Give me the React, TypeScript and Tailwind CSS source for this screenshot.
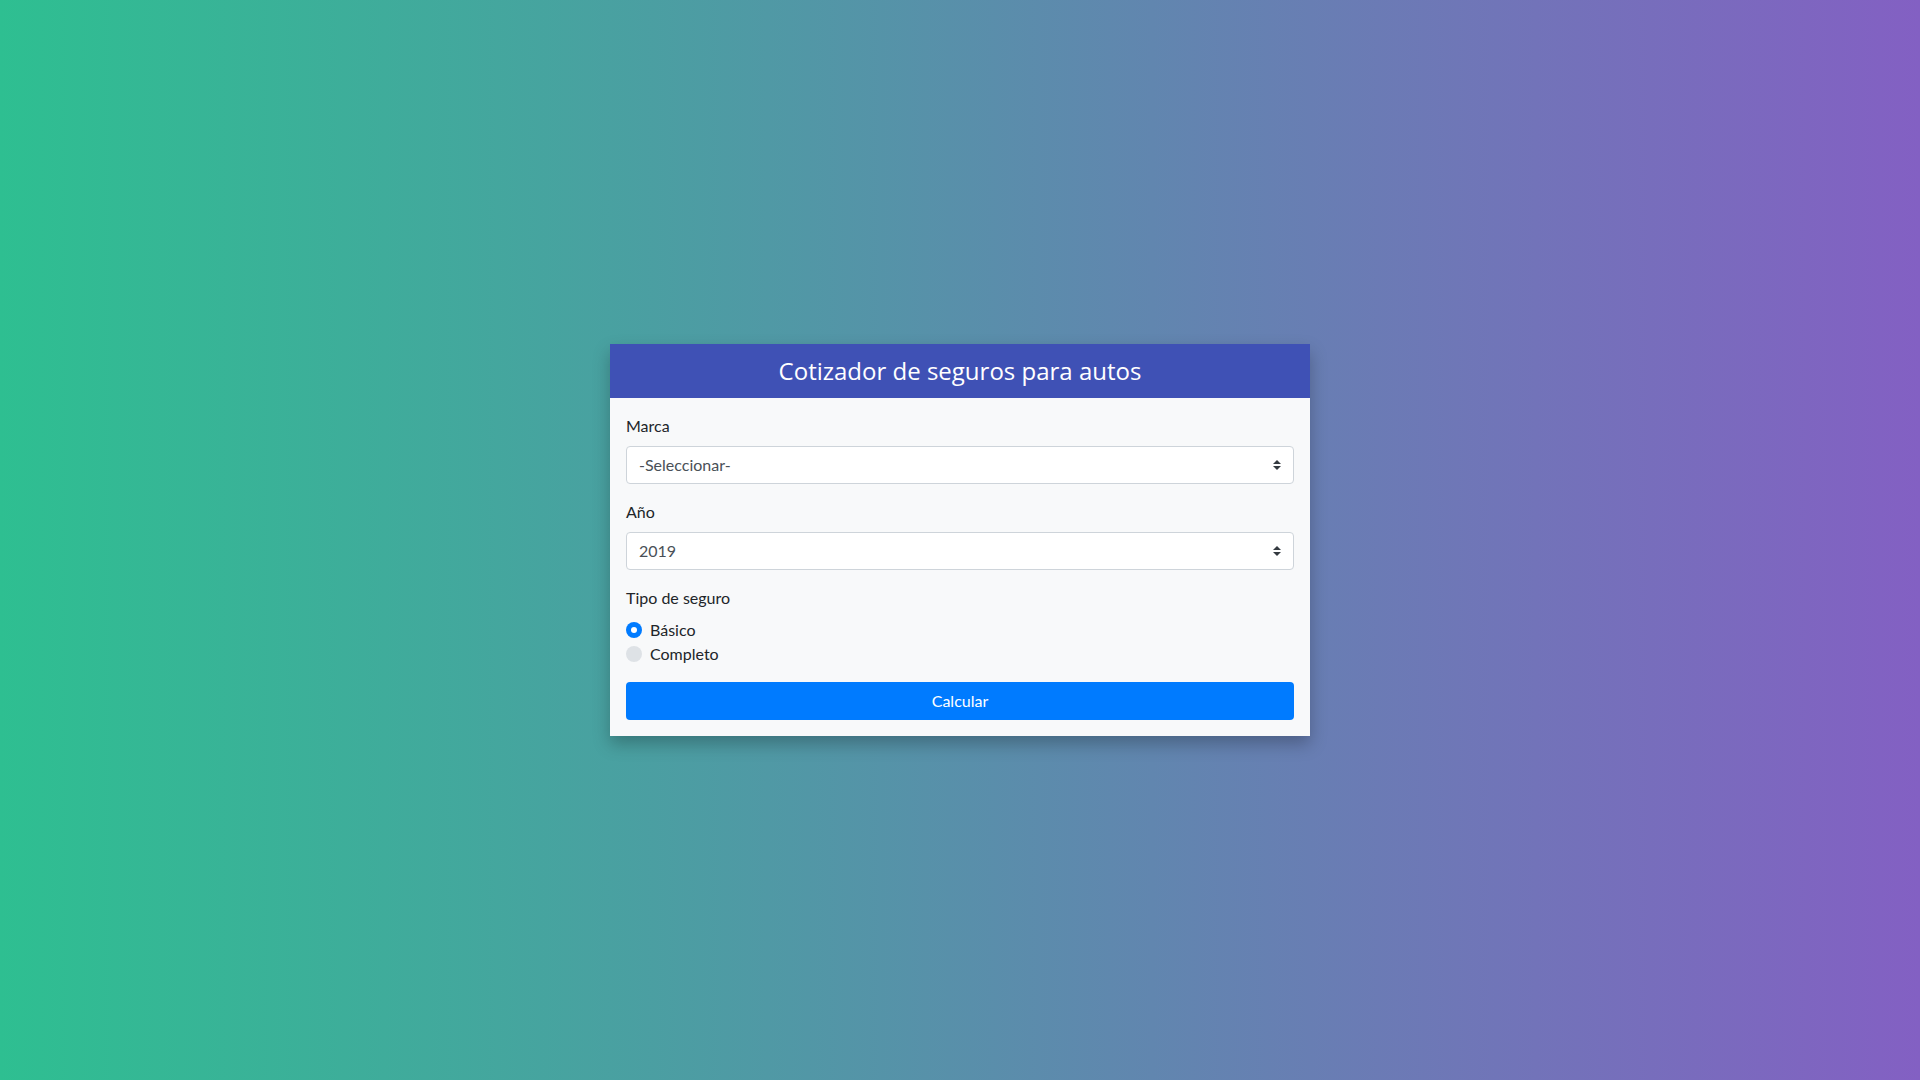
import React, { useState } from "react";

function Arrows() {
  return (
    <svg width="8" height="10" viewBox="0 0 4 5" className="absolute right-[13px] top-1/2 -translate-y-1/2 pointer-events-none">
      <path fill="#343a40" d="M2 0L0 2h4zm0 5L0 3h4z" />
    </svg>
  );
}

function Select({ value, options }: { value: string; options: string[] }) {
  return (
    <div className="relative mb-4">
      <select
        defaultValue={value}
        className="block w-full h-[38px] appearance-none rounded-[4px] border border-[#ced4da] bg-white pl-[12px] pr-8 text-[16px] leading-[24px] text-[#495057] outline-none"
        style={{ fontFamily: "Lato, 'Noto Sans', sans-serif" }}
      >
        {options.map((o) => (
          <option key={o}>{o}</option>
        ))}
      </select>
      <Arrows />
    </div>
  );
}

function Radio({ label, checked, onClick }: { label: string; checked: boolean; onClick: () => void }) {
  return (
    <label className="flex items-center h-6 cursor-pointer" onClick={onClick}>
      <span
        className={
          checked
            ? "w-4 h-4 rounded-full bg-[#007bff] flex items-center justify-center"
            : "w-4 h-4 rounded-full bg-[#dee2e6] flex items-center justify-center"
        }
      >
        {checked && <span className="w-[6px] h-[6px] rounded-full bg-white" />}
      </span>
      <span className="ml-[8px] text-[16px] text-[#212529]">{label}</span>
    </label>
  );
}

export default function App() {
  const [tipo, setTipo] = useState("basico");
  const years = Array.from({ length: 20 }, (_, i) => String(2019 - i));
  return (
    <div
      className="w-full h-[1080px] flex items-center justify-center bg-[linear-gradient(to_right,#2ebf91,#8360c3)]"
      style={{ fontFamily: "Lato, 'Noto Sans', sans-serif" }}
    >
      <div className="w-[700px] bg-[#f8f9fa] shadow-[0_8px_16px_rgba(0,0,0,0.25)]">
        <div className="h-[54px] bg-[#3f51b5] flex items-center justify-center">
          <h1
            className="text-white text-[24px] font-normal"
            style={{ fontFamily: "'Open Sans', Lato, sans-serif" }}
          >
            Cotizador de seguros para autos
          </h1>
        </div>
        <form className="px-4 pt-4 pb-4" onSubmit={(e) => e.preventDefault()}>
          <label className="block mb-2 text-[16px] leading-6 text-[#212529]">Marca</label>
          <Select value="-Seleccionar-" options={["-Seleccionar-", "Americano", "Europeo", "Asiático"]} />
          <label className="block mb-2 text-[16px] leading-6 text-[#212529]">Año</label>
          <Select value="2019" options={years} />
          <label className="block mb-2 text-[16px] leading-6 text-[#212529]">Tipo de seguro</label>
          <div className="flex flex-col">
            <Radio label="Básico" checked={tipo === "basico"} onClick={() => setTipo("basico")} />
            <Radio label="Completo" checked={tipo === "completo"} onClick={() => setTipo("completo")} />
          </div>
          <button
            type="submit"
            className="mt-4 w-full h-[38px] rounded-[4px] bg-[#007bff] text-white text-[16px]"
          >
            Calcular
          </button>
        </form>
      </div>
    </div>
  );
}
